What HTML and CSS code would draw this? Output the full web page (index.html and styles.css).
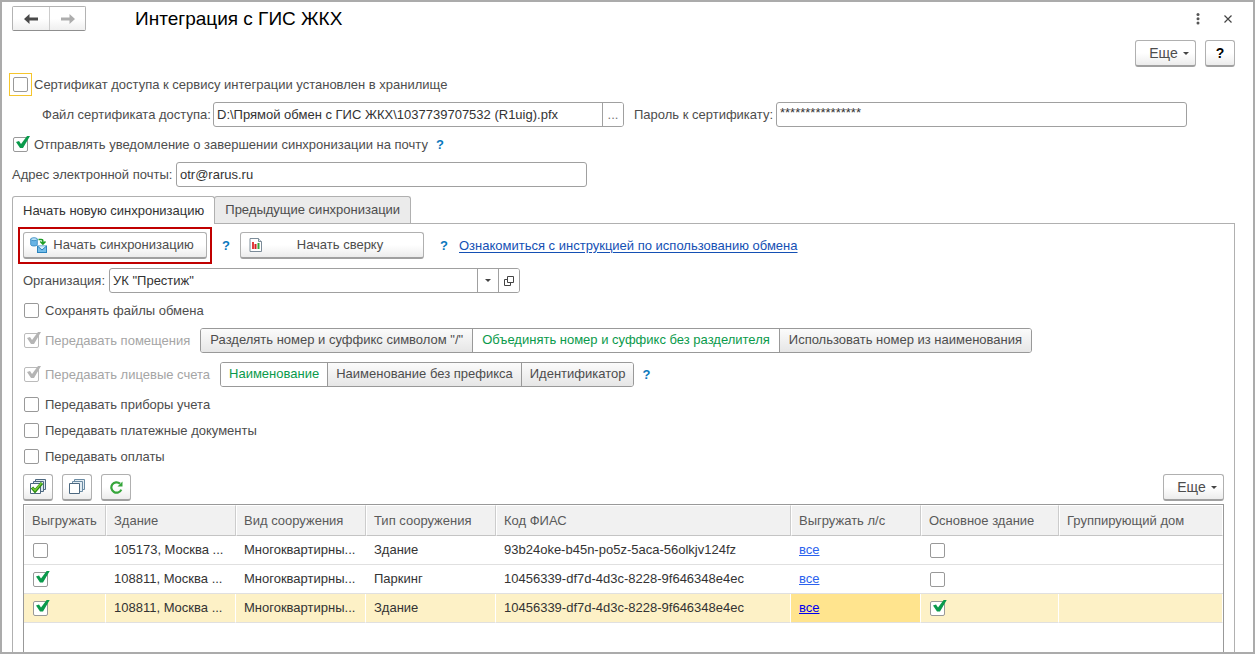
FILE: index.html
```html
<!DOCTYPE html>
<html lang="ru">
<head>
<meta charset="utf-8">
<title>Интеграция с ГИС ЖКХ</title>
<link rel="stylesheet" href="styles.css">
</head>
<body>
<main class="window">
  <header class="titlebar">
    <div class="nav">
      <button class="nav-btn" type="button" aria-label="Назад"><svg width="14" height="10" viewBox="0 0 14 10"><path d="M0 5 5.500 0v3.600H14v2.800H5.500V10z" fill="#4a4a4a"/></svg></button>
      <button class="nav-btn" type="button" aria-label="Вперед"><svg width="14" height="10" viewBox="0 0 14 10"><path d="M14 5 8.500 0v3.600H0v2.800h8.500V10z" fill="#adadad"/></svg></button>
    </div>
    <h1 class="title">Интеграция с ГИС ЖКХ</h1>
    <button class="icon-btn" type="button" aria-label="Меню"><svg width="4" height="12" viewBox="0 0 4 12"><g fill="#555"><circle cx="2" cy="1.500" r="1.500"/><circle cx="2" cy="5.700" r="1.500"/><circle cx="2" cy="9.900" r="1.500"/></g></svg></button>
    <button class="icon-btn" type="button" aria-label="Закрыть"><svg width="8" height="8" viewBox="0 0 8 8"><path d="M.5.5l7 7m0-7-7 7" stroke="#444" stroke-width="1.200"/></svg></button>
  </header>

  <div class="commands">
    <button class="btn more" type="button">Еще <span class="caret"></span></button>
    <button class="btn square help-btn" type="button">?</button>
  </div>

  <form class="form">
    <div class="row">
      <span class="focus"><input class="check" type="checkbox" id="cert"></span>
      <label class="beside" for="cert">Сертификат доступа к сервису интеграции установлен в хранилище</label>
    </div>
    <div class="row">
      <label class="label file-label" for="file">Файл сертификата доступа:</label>
      <span class="field">
        <input class="input" id="file" type="text" value="D:\Прямой обмен с ГИС ЖКХ\1037739707532 (R1uig).pfx">
        <button class="field-btn dots" type="button">...</button>
      </span>
      <label class="label pass-label" for="pass">Пароль к сертификату:</label>
      <span class="field"><input class="input stars" id="pass" type="text" value="****************"></span>
    </div>
    <div class="row">
      <input class="check" type="checkbox" id="notify" checked>
      <label class="beside" for="notify">Отправлять уведомление о завершении синхронизации на почту</label>
      <a class="help" href="#">?</a>
    </div>
    <div class="row">
      <label class="label mail-label" for="mail">Адрес электронной почты:</label>
      <span class="field"><input class="input" id="mail" type="text" value="otr@rarus.ru"></span>
    </div>

    <div class="tabs">
      <button class="tab active" type="button">Начать новую синхронизацию</button>
      <button class="tab" type="button">Предыдущие синхронизации</button>
    </div>

    <section class="panel">
      <div class="actions">
        <span class="marker">
          <button class="btn wide" type="button">
            <svg width="17" height="16" viewBox="0 0 17 16"><path d="M.7 2.200v5.300c0 2 6.600 2 6.600 0V2.200z" fill="#68b4e5" stroke="#2b83bd" stroke-width=".8"/><ellipse cx="4" cy="2.200" rx="3.300" ry="1.500" fill="#b9e1f7" stroke="#2b83bd" stroke-width=".8"/><path d="M8.500 2.500h2.800c1.200 0 1.600.5 1.600 1.600v2M10.300 4.500l2.600 2.700 2.600-2.700" fill="none" stroke="#1c9d25" stroke-width="1.600"/><rect x="7.500" y="9" width="9" height="6.500" fill="#74bde9" stroke="#2b83bd"/><path d="M7.800 9.300 12 13l4.200-3.700" fill="#d5eefb" stroke="#2b83bd"/></svg>
            <span class="btn-text">Начать синхронизацию</span>
          </button>
        </span>
        <a class="help" href="#">?</a>
        <button class="btn wide report" type="button">
          <svg width="14" height="14" viewBox="0 0 14 14"><path d="M1 .5h8.500l3 3v10H1z" fill="#fff" stroke="#7c8c99"/><path d="M9.500.5v3h3" fill="#dce4ea" stroke="#7c8c99"/><path d="M3 4h2v7H3z" fill="#e33d3d"/><path d="M5.500 6h2v5h-2z" fill="#d42020"/><path d="M8.500 5h2v6h-2z" fill="#35a43c"/></svg>
          <span class="btn-text">Начать сверку</span>
        </button>
        <a class="help" href="#">?</a>
        <a class="link" href="#">Ознакомиться с инструкцией по использованию обмена</a>
      </div>

      <div class="row">
        <label class="label org-label" for="org">Организация:</label>
        <span class="field">
          <input class="input" id="org" type="text" value='УК "Престиж"'>
          <button class="field-btn" type="button" aria-label="Выбрать"><span class="caret"></span></button>
          <button class="field-btn" type="button" aria-label="Открыть"><svg width="10" height="10" viewBox="0 0 10 10"><path d="M3.500.5h6v6h-6zM3.500 3.500h-3v6h6v-3" fill="none" stroke="#444"/></svg></button>
        </span>
      </div>
      <div class="row">
        <input class="check" type="checkbox" id="save"><label class="beside" for="save">Сохранять файлы обмена</label>
      </div>
      <div class="row">
        <input class="check" type="checkbox" id="rooms" checked disabled><label class="beside" for="rooms">Передавать помещения</label>
        <div class="segments">
          <label class="seg"><input type="radio" name="rooms-mode">Разделять номер и суффикс символом "/"</label>
          <label class="seg"><input type="radio" name="rooms-mode" checked>Объединять номер и суффикс без разделителя</label>
          <label class="seg"><input type="radio" name="rooms-mode">Использовать номер из наименования</label>
        </div>
      </div>
      <div class="row spaced">
        <input class="check" type="checkbox" id="accounts" checked disabled><label class="beside" for="accounts">Передавать лицевые счета</label>
        <div class="segments compact">
          <label class="seg"><input type="radio" name="acc-mode" checked>Наименование</label>
          <label class="seg"><input type="radio" name="acc-mode">Наименование без префикса</label>
          <label class="seg"><input type="radio" name="acc-mode">Идентификатор</label>
        </div>
        <a class="help" href="#">?</a>
      </div>
      <div class="row">
        <input class="check" type="checkbox" id="meters"><label class="beside" for="meters">Передавать приборы учета</label>
      </div>
      <div class="row tight">
        <input class="check" type="checkbox" id="docs"><label class="beside" for="docs">Передавать платежные документы</label>
      </div>
      <div class="row tight">
        <input class="check" type="checkbox" id="pays"><label class="beside" for="pays">Передавать оплаты</label>
      </div>

      <div class="toolbar">
        <button class="btn square" type="button" aria-label="Отметить все"><svg width="16" height="16" viewBox="0 0 16 16"><g fill="#dce9ef" stroke="#4d6880"><path d="M5.500.5h10v10h-10z"/><path d="M3.500 2.500h10v10h-10z"/><path d="M.5 4.500h10v10H.5z" fill="#fff"/></g><path d="m2 8.500 3 3.500 7-8" fill="none" stroke="#2a8c12" stroke-width="3.200"/><path d="m2.500 9 2.500 2.500 6.500-7.500" fill="none" stroke="#7ace35" stroke-width="1.400"/></svg></button>
        <button class="btn square" type="button" aria-label="Снять отметки"><svg width="16" height="16" viewBox="0 0 16 16"><g fill="#e3edf3" stroke="#6b8ba3"><path d="M5.500.5h10v10h-10z"/><path d="M3.500 2.500h10v10h-10z"/><path d="M.5 4.500h10v10H.5z" fill="#fff" stroke="#4d6880"/></g></svg></button>
        <button class="btn square" type="button" aria-label="Обновить"><svg width="13" height="13" viewBox="0 0 13 13"><path d="M11.300 8.600A5.200 5.200 0 1 1 10 2.600" fill="none" stroke="#35a53a" stroke-width="2.200"/><path d="M12.500.5v5h-5z" fill="#35a53a"/></svg></button>
        <button class="btn more push" type="button">Еще <span class="caret"></span></button>
      </div>

      <div class="grid">
        <table class="table">
          <colgroup><col class="c-flag"><col class="c-mid"><col class="c-mid"><col class="c-mid"><col class="c-code"><col class="c-mid"><col class="c-main"><col></colgroup>
          <thead>
            <tr><th>Выгружать</th><th>Здание</th><th>Вид сооружения</th><th>Тип сооружения</th><th>Код ФИАС</th><th>Выгружать л/с</th><th>Основное здание</th><th>Группирующий дом</th></tr>
          </thead>
          <tbody>
            <tr><td><input class="check" type="checkbox" aria-label="Выгружать"></td><td>105173, Москва ...</td><td>Многоквартирны...</td><td>Здание</td><td>93b24oke-b45n-po5z-5aca-56olkjv124fz</td><td><a href="#">все</a></td><td><input class="check" type="checkbox" aria-label="Основное здание"></td><td></td></tr>
            <tr><td><input class="check" type="checkbox" aria-label="Выгружать" checked></td><td>108811, Москва ...</td><td>Многоквартирны...</td><td>Паркинг</td><td>10456339-df7d-4d3c-8228-9f646348e4ec</td><td><a href="#">все</a></td><td><input class="check" type="checkbox" aria-label="Основное здание"></td><td></td></tr>
            <tr class="selected"><td><input class="check" type="checkbox" aria-label="Выгружать" checked></td><td>108811, Москва ...</td><td>Многоквартирны...</td><td>Здание</td><td>10456339-df7d-4d3c-8228-9f646348e4ec</td><td class="current"><a href="#">все</a></td><td><input class="check" type="checkbox" aria-label="Основное здание" checked></td><td></td></tr>
          </tbody>
        </table>
      </div>
    </section>
  </form>
</main>
</body>
</html>
```
FILE: styles.css
```css
* { box-sizing: border-box; }

body {
  margin: 0;
  background: #fff;
  color: #4d4d4d;
  font: 13px/16px "Liberation Sans", Arial, sans-serif;
}

button, input { font: inherit; color: inherit; margin: 0; }
button { cursor: pointer; }
svg { display: block; flex: none; }

.window {
  display: flex;
  flex-direction: column;
  min-height: 100vh;
  padding: 4px 18px 0 10px;
  border: 2px solid #ababab;
}

.titlebar { display: flex; align-items: center; height: 25px; }
.nav { display: flex; margin-right: 49px; border: 1px solid #b3b3b3; border-bottom-color: #8f8f8f; border-radius: 2px; }
.nav-btn {
  display: grid;
  place-items: center;
  width: 36px;
  height: 23px;
  padding: 0;
  border: 0;
  background: linear-gradient(#fff 50%, #efefef);
}
.nav-btn + .nav-btn { border-left: 1px solid #ccc; }
.title { flex: 1; margin: 0; color: #000; font-size: 19px; line-height: 24px; font-weight: 400; }
.icon-btn { display: grid; place-items: center; width: 30px; height: 24px; padding: 0; border: 0; background: none; }
.icon-btn:last-child { margin-right: -8px; }

.commands { display: flex; justify-content: flex-end; gap: 9px; margin: 9px 0 5px; }

.btn {
  display: flex;
  align-items: center;
  justify-content: center;
  height: 27px;
  padding: 0 6px;
  border: 1px solid #b0b0b0;
  border-bottom: 2px solid #a0a0a0;
  border-radius: 3px;
  background: linear-gradient(#fff 50%, #ececec);
}
.square { width: 30px; padding: 0; }
.help-btn { color: #000; font-size: 14px; font-weight: 700; }
.more { width: 61px; gap: 5px; padding: 0 5px 0 12px; font-size: 14px; }
.push { margin-left: auto; }
.wide { width: 184px; }
.report { padding-left: 8px; }
.btn-text { flex: 1; text-align: center; }
.caret { width: 0; border: 3px solid transparent; border-top-color: #444; border-bottom: 0; }

.form { display: flex; flex: 1; flex-direction: column; }
.row { display: flex; align-items: center; height: 25px; margin-bottom: 5px; }
.spaced { margin-top: 4px; }
.tight { margin-top: -4px; }

.check {
  flex: none;
  appearance: none;
  position: relative;
  width: 15px;
  height: 15px;
  margin-left: 1px;
  border: 1px solid #999;
  border-radius: 2px;
  background: #fff;
}
.check:checked::before {
  content: "";
  position: absolute;
  left: 2px;
  top: -2px;
  width: 14px;
  height: 12px;
  background: #0a9a4b;
  clip-path: polygon(0 6px, 3px 5px, 5px 8px, 11px 0, 14px 0, 7px 12px, 4px 12px);
}
.check:disabled { border-color: #bbb; }
.check:disabled::before { background: #b5b5b5; }
.check:disabled + label { color: #a5a5a5; }
.beside { margin-left: 6px; }

.focus { margin: 0 -4px 0 -3px; padding: 3px; border: 1px solid #f5c52c; }
.focus .check { display: block; margin: 0; }

.label { flex: none; }
.file-label { width: 201px; padding-left: 30px; }
.pass-label { width: 152px; padding-left: 10px; }
.mail-label { width: 164px; }
.org-label { width: 86px; }

.field {
  display: flex;
  width: 411px;
  height: 25px;
  border: 1px solid #a0a0a0;
  border-radius: 3px;
  background: #fff;
  overflow: hidden;
}
.input { flex: 1; min-width: 0; padding: 0 3px; border: 0; outline: 0; background: none; color: #333; }
.stars { padding-bottom: 3px; }
.field-btn { display: grid; place-items: center; width: 21px; padding: 0; border: 0; border-left: 1px solid #a0a0a0; background: #fff; }
.dots { color: #777; }

.help { margin-left: 8px; color: #0a78bd; font-weight: 700; text-decoration: none; }

.tabs { display: flex; margin-top: 4px; }
.tab {
  height: 27px;
  padding: 0 10px;
  border: 1px solid #b0b0b0;
  border-bottom: 0;
  border-radius: 3px 3px 0 0;
  background: #ebebeb;
}
.tab.active { position: relative; height: 28px; margin-bottom: -1px; background: #fff; color: #333; }
.tab + .tab { margin-left: -1px; }

.panel {
  display: flex;
  flex: 1;
  flex-direction: column;
  padding: 3px 10px 0;
  border: 1px solid #b0b0b0;
  border-bottom: 0;
}

.actions { display: flex; align-items: center; margin-bottom: 4px; }
.marker { margin-left: -5px; padding: 3px; border: 2px solid #c00000; }
.actions .help { width: 20px; margin: 0; text-align: center; }
.actions .marker + .help { width: 28px; }
.actions .wide + .help { margin-left: 10px; }
.link { margin-left: 5px; color: #1450b4; text-underline-offset: 2px; }

.segments { display: flex; margin-left: 10px; border: 1px solid #999; border-radius: 3px; overflow: hidden; }
.seg { padding: 3px 9px 4px; background: linear-gradient(#fbfbfb, #e6e6e6); white-space: nowrap; }
.compact .seg { padding-left: 8px; padding-right: 8px; }
.seg + .seg { border-left: 1px solid #999; }
.seg:has(:checked) { background: #fff; color: #0a9a4b; }
.seg input { position: absolute; opacity: 0; pointer-events: none; }

.toolbar { display: flex; gap: 9px; margin-bottom: 3px; }

.grid { flex: 1; border: 1px solid #999; border-bottom: 0; }
.table { width: 100%; table-layout: fixed; border-collapse: separate; border-spacing: 0; color: #333; }
.c-flag { width: 82px; }
.c-mid { width: 130px; }
.c-code { width: 295px; }
.c-main { width: 138px; }
.table th, .table td { padding: 0 8px; text-align: left; font-weight: 400; white-space: nowrap; overflow: hidden; }
.table th {
  height: 31px;
  padding-left: 7px;
  border: 1px solid #fff;
  border-right-color: #ccc;
  border-bottom-color: #c4c4c4;
  background: #f1f1f1;
  color: #5a5a5a;
}
.table td { height: 29px; border-bottom: 1px solid #e0e0e0; }
.table th:last-child { border-right-color: #fff; }
.table .check { display: block; }
.table a { color: #2a62ee; }
.table .selected td { border-right: 1px solid #fff; background: #fdf1c6; }
.table .selected .current { background: #ffe48e; }
.table .selected a { color: #0000f0; }
```
